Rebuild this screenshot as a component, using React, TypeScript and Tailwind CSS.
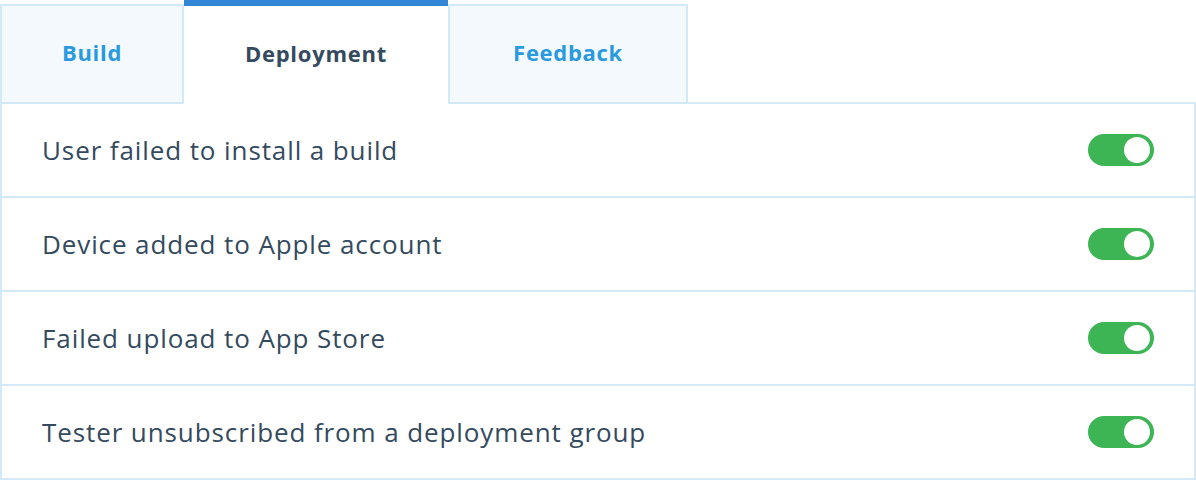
import React from 'react';

const rows = [
  'User failed to install a build',
  'Device added to Apple account',
  'Failed upload to App Store',
  'Tester unsubscribed from a deployment group',
];

function Toggle() {
  return (
    <div className="w-[66px] h-[32px] rounded-full bg-[#3db554] flex items-center justify-end pr-[4px]">
      <div className="w-[26px] h-[26px] rounded-full bg-white" />
    </div>
  );
}

export default function App() {
  return (
    <div className="w-[1196px] h-[480px] bg-white" style={{ fontFamily: '"Open Sans", Lato, sans-serif' }}>
      {/* Tabs */}
      <div className="flex items-end h-[104px]">
        <div className="w-[184px] h-[100px] bg-[#f4f9fd] border-2 border-[#d3e9f8] flex items-center justify-center pb-[3px]">
          <span className="text-[22px] font-bold text-[#2a9ae0] tracking-[0.7px]">Build</span>
        </div>
        <div className="w-[264px] h-[104px] bg-white border-t-[6px] border-[#3385d6] flex items-center justify-center pb-[4px]">
          <span className="text-[22px] font-bold text-[#344a5e] tracking-[0.75px]">Deployment</span>
        </div>
        <div className="w-[240px] h-[100px] bg-[#f4f9fd] border-2 border-[#d3e9f8] flex items-center justify-center pb-[3px]">
          <span className="text-[22px] font-bold text-[#2a9ae0] tracking-[0.7px]">Feedback</span>
        </div>
        <div className="flex-1 h-[2px] bg-[#d3e9f8]" />
      </div>

      {/* Settings list */}
      <div className="border-2 border-t-0 border-[#d3e9f8]">
        {rows.map((label, i) => (
          <div
            key={label}
            className={`flex items-center justify-between pl-[40px] pr-[40px] ${
              i < rows.length - 1 ? 'h-[94px] border-b-2 border-[#d3e9f8]' : 'h-[92px]'
            }`}
          >
            <span className="text-[26px] text-[#344a5e] tracking-[0.9px]">{label}</span>
            <Toggle />
          </div>
        ))}
      </div>
    </div>
  );
}
